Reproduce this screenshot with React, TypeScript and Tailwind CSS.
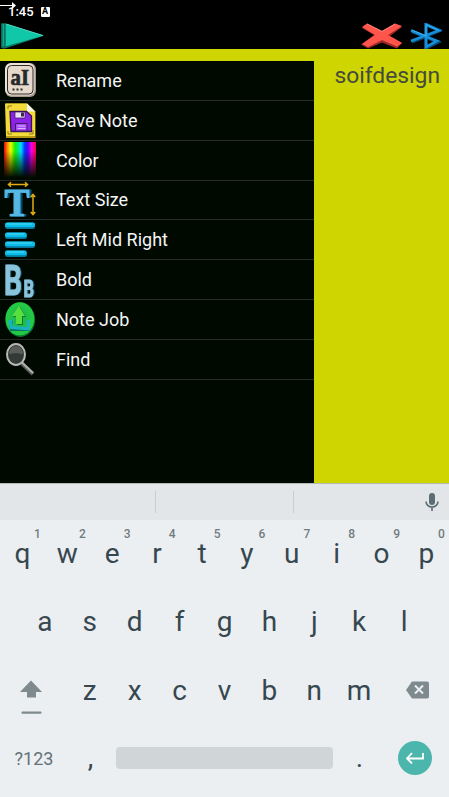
import type { ReactNode } from "react";

function RenameIcon() {
  return (
    <svg width="32" height="36" viewBox="0 0 32 36">
      <rect x="0.5" y="1" width="30.5" height="34" rx="6" fill="#a69b90" />
      <rect x="0" y="1" width="29.5" height="32.5" rx="6" fill="#eee1d5" />
      <rect x="2.5" y="3.5" width="25.5" height="28.5" rx="4" fill="#e6d8ca" stroke="#2c2b2b" strokeWidth="1" />
      <text x="5.5" y="23" fontFamily="Liberation Serif, serif" fontWeight="700" fontSize="24" fill="#252a2b" stroke="#252a2b" strokeWidth="0.7" textLength="18.5" lengthAdjust="spacingAndGlyphs">aI</text>
      <path d="M7.500 26.500h2v2h-2zM11.500 26.500h2v2h-2zM15.500 26.500h2v2h-2z" fill="#252a2b" />
    </svg>
  );
}

function SaveIcon() {
  return (
    <svg width="32" height="36" viewBox="0 0 32 36">
      <path d="M1 1.500h21l8.500 8V36H1z" fill="#b39a12" />
      <path d="M0 1.500h22l8 8V34H1z" fill="#f3dc3a" />
      <path d="M22 1.500v8h8z" fill="#f4f4f4" />
      <path d="M3 7V4h4M3 29v3h4M24 32h4v-4" fill="none" stroke="#937915" strokeWidth="1" />
      <path d="M5 9.500h16.500l5 4.500v15.500H6z" fill="#8c22e6" stroke="#351259" strokeWidth="1.3" />
      <path d="M10 10h10v6H10z" fill="#eadff2" stroke="#351259" strokeWidth="0.7" />
      <path d="M16 10.500h3v4h-3z" fill="#3c2451" />
      <path d="M10.500 21.500h11.500v7.500H10.500z" fill="#a84df7" stroke="#421a6a" strokeWidth="1" />
      <path d="M12.500 24h8M12.500 26.500h8" stroke="#dfb4ff" strokeWidth="1" />
    </svg>
  );
}

function SpectrumIcon() {
  return (
    <div className="-ml-px h-9 w-8 bg-[linear-gradient(to_bottom,transparent_25%,#000b00_98%),linear-gradient(to_right,#ed0010,#ff9b00_12%,#e6ff00_21%,#22ed00_34%,#00ec75_44%,#00dcff_53%,#0038ff_65%,#5b00ec_75%,#f500ed_86%,#ff0034)]" />
  );
}

function TextSizeIcon() {
  return (
    <svg className="overflow-visible" width="32" height="36" viewBox="0 0 32 36">
      <text className="drop-shadow-[2px_0px_0px_#07506f]" x="-0.500" y="33.500" fontFamily="Liberation Serif, serif" fontWeight="700" fontSize="40" fill="#55b8e5" stroke="#55b8e5" strokeWidth="1.200" textLength="25" lengthAdjust="spacingAndGlyphs">T</text>
      <path d="M3.500 2.500h19M6 .3 3.500 2.500 6 4.700M20 .3 22.500 2.500 20 4.700M28 13v19M25.800 15 28 12.500l2.200 2.500M25.800 30 28 32.500l2.200-2.500" fill="none" stroke="#e1ac12" strokeWidth="1.500" />
    </svg>
  );
}

function AlignIcon() {
  return (
    <svg width="32" height="36" viewBox="0 0 32 36">
      <g fill="#087799">
        <rect x="0" y="0.500" width="30" height="6.500" rx="2.500" />
        <rect x="0" y="10.500" width="22" height="6.500" rx="2.500" />
        <rect x="0" y="19.500" width="30" height="6.500" rx="2.500" />
        <rect x="0" y="28.500" width="22" height="6.500" rx="2.500" />
      </g>
      <g fill="#0bbde9">
        <rect x="0" y="0.500" width="30" height="4.800" rx="2" />
        <rect x="0" y="10.500" width="21.500" height="4.800" rx="2" />
        <rect x="0" y="19.500" width="30" height="4.800" rx="2" />
        <rect x="0" y="28.500" width="21.500" height="4.800" rx="2" />
      </g>
      <path d="M2 2h25M2 12h17M2 21h25M2 30h17" stroke="#51dcf4" strokeWidth="1" />
    </svg>
  );
}

function BoldIcon() {
  return (
    <svg className="overflow-visible" width="32" height="36" viewBox="0 0 32 36" fontFamily="Roboto, sans-serif" fontWeight="700">
      <g className="drop-shadow-[1.500px_0px_0px_#174e68]" fill="#8ac3dc" stroke="#8ac3dc" strokeWidth="1">
        <text x="-1" y="32.500" fontSize="43" textLength="18" lengthAdjust="spacingAndGlyphs">B</text>
        <text x="18.500" y="35" fontSize="24" textLength="10.500" lengthAdjust="spacingAndGlyphs">B</text>
      </g>
    </svg>
  );
}

function JobIcon() {
  return (
    <svg width="32" height="36" viewBox="0 0 32 36">
      <defs>
        <radialGradient id="job"><stop offset="0.4" stopColor="#20b951" /><stop offset="1" stopColor="#24ce3e" /></radialGradient>
      </defs>
      <ellipse cx="15.300" cy="18.700" rx="14.800" ry="17.200" fill="#0b7933" />
      <ellipse cx="14.800" cy="17.800" rx="14.300" ry="16.500" fill="url(#job)" />
      <path d="M4 20h4v6h15v-6h2v10H5z" fill="#087267" />
      <path d="m3 19 4-.5 1 6.500 14 1v-7h3v10.500L5 28z" fill="#18b3bc" />
      <path d="m15 6 6 10h-3v8h-6v-8H8z" fill="#10792f" />
      <path d="m14 5 6 10h-3v8h-6v-8H7z" fill="#57df3b" />
    </svg>
  );
}

function FindIcon() {
  return (
    <svg width="32" height="36" viewBox="0 0 32 36">
      <path d="m17 22.500 11 10.500" stroke="#5b5e5b" strokeWidth="4" />
      <path d="m17 21.500 11 10.500" stroke="#b0b0af" strokeWidth="1.800" />
      <ellipse cx="11" cy="13.500" rx="9" ry="10.500" fill="#343a35" stroke="#b6b8b6" strokeWidth="2" />
      <path d="M4 13.500Q4.500 5 11 5t7 8.500q-7-3-14 0" fill="#585d58" />
    </svg>
  );
}

function PlayIcon() {
  return (
    <svg width="44" height="26" viewBox="0 0 44 26">
      <path d="M0 1q0-1 3-1l40 12.800L4 25.500q-4 0-4-2z" fill="#08745f" />
      <path d="M4 .8 42 12.800 4 23.500z" fill="#10c7a7" />
      <path d="M.8 1v22M4 1v23" stroke="#096a5a" strokeWidth="1.300" />
      <path d="M2.400 1v22" stroke="#10a98e" strokeWidth="1.600" />
      <path d="m5 1 37 11.500" stroke="#52dac4" strokeWidth="1" />
    </svg>
  );
}

function CloseIcon() {
  return (
    <svg width="42" height="26" viewBox="0 0 42 26">
      <path d="m1 5 5-4 15 7 14-7 6 3-12 9 12 7-5 5.500-15-6-14 6-7-4 13-9.500z" fill="#a22827" />
      <path d="m1 4 5-3.500L21 8l13-7.500 7 2.500-14 9 14 8-5 3.500-15-6.500-14 7-6-3 13-9z" fill="#ff554b" />
      <path d="m6 1 15 7.500L34 1" fill="none" stroke="#ff827a" strokeWidth="1" />
    </svg>
  );
}

function BluetoothIcon() {
  return (
    <svg width="32" height="26" viewBox="0 0 32 26" fill="none">
      <path d="m2 8.500 26 10.500-12 6V1.500l14 6L2 19" stroke="#0a4875" strokeWidth="3.500" />
      <path d="m1 7.500 26 10.500-11 6V1.500l13 6L1 18" stroke="#168ed7" strokeWidth="2.600" />
      <path d="m2 7 14 6V1.500l13 6" stroke="#43b8f3" strokeWidth="0.800" />
    </svg>
  );
}

const menu: { label: string; icon: ReactNode }[] = [
  { label: "Rename", icon: <RenameIcon /> },
  { label: "Save Note", icon: <SaveIcon /> },
  { label: "Color", icon: <SpectrumIcon /> },
  { label: "Text Size", icon: <TextSizeIcon /> },
  { label: "Left Mid Right", icon: <AlignIcon /> },
  { label: "Bold", icon: <BoldIcon /> },
  { label: "Note Job", icon: <JobIcon /> },
  { label: "Find", icon: <FindIcon /> },
];

function Key({ children, hint }: { children: ReactNode; hint?: string }) {
  return (
    <div className="relative flex h-full w-[44.9px] shrink-0 items-center justify-center text-[28px] leading-none">
      {children}
      {hint && <span className="absolute top-[7px] right-[4px] text-[12px] leading-[14px] font-medium text-[#727c80]">{hint}</span>}
    </div>
  );
}

function Keyboard() {
  return (
    <section className="h-[314px] bg-[#ebeff2] text-[#37474f]">
      <div className="flex h-[37px] items-center border-t border-[#b3b9b3] bg-[#e2e6e9]">
        <div className="h-[22px] w-[156px] border-r border-[#c9ced1]" />
        <div className="h-[22px] w-[138px] border-r border-[#c9ced1]" />
        <svg className="mr-[10px] ml-auto" width="14" height="18" viewBox="0 0 14 18">
          <rect x="4" width="6" height="12" rx="3" fill="#5d6d74" />
          <path d="M1 8.500c0 3 2.500 5.500 6 5.500s6-2.500 6-5.500M7 14v4" fill="none" stroke="#5d6d74" strokeWidth="1.600" />
        </svg>
      </div>
      <div className="flex h-[68px]">
        {[..."qwertyuiop"].map((letter, i) => <Key key={letter} hint={String((i + 1) % 10)}>{letter}</Key>)}
      </div>
      <div className="flex h-[69px] justify-center pb-px">
        {[..."asdfghjkl"].map((letter) => <Key key={letter}>{letter}</Key>)}
      </div>
      <div className="flex h-[67px]">
        <div className="flex w-[67.350px] items-center pl-[20px]">
          <svg className="mt-[13px]" width="22" height="35" viewBox="0 0 22 35">
            <path d="M11 0 22 11.500h-6V17H7v-5.500H0z" transform="translate(0 .5)" fill="#7e8a8e" />
            <rect x="1.500" y="31.500" width="20" height="2.300" rx="1" fill="#7e8a8e" />
          </svg>
        </div>
        {[..."zxcvbnm"].map((letter) => <Key key={letter}>{letter}</Key>)}
        <div className="flex flex-1 items-center pb-[2px] pl-[24px]">
          <svg width="23" height="18" viewBox="0 0 23 18">
            <path d="M6 .5h15q2 0 2 2v13q0 2-2 2H6L0 9z" fill="#7e8a8e" />
            <path d="m9 4.500 8 8m0-8-8 8" stroke="#ebeff2" strokeWidth="2" />
          </svg>
        </div>
      </div>
      <div className="flex h-[68px] items-center">
        <div className="w-[68px] text-center text-[18px] text-[#647177]">?123</div>
        <Key>,</Key>
        <div className="ml-[3px] h-[22px] w-[217px] rounded bg-[#d0d5d8]" />
        <div className="ml-[4px]"><Key>.</Key></div>
        <div className="ml-[16px] flex size-[34px] items-center justify-center rounded-full bg-[#4db6ac]">
          <svg width="18" height="12" viewBox="0 0 18 12" fill="none" stroke="white" strokeWidth="1.800">
            <path d="M17 1v5.500H1M6 1 1 6.500 6 11.500" />
          </svg>
        </div>
      </div>
    </section>
  );
}

export default function App() {
  return (
    <main className="flex h-[797px] w-[449px] flex-col overflow-hidden bg-[#ced500] font-[Roboto,sans-serif]">
      <header className="relative h-[49px] shrink-0 bg-black text-white">
        <div className="flex h-[23px] items-center gap-[7px] pl-[8px] text-[13px] font-medium">
          <span>1:45</span>
          <span className="flex h-[10px] w-[9px] items-center justify-center rounded-[1px] bg-white text-[9px] leading-none font-bold text-black">A</span>
        </div>
        <svg className="absolute top-[1px] left-0" width="17" height="9" viewBox="0 0 17 9">
          <path d="M0 4.500h13" stroke="white" />
          <path d="m12 1 4 3.500L12 8z" fill="white" />
        </svg>
        <div className="flex h-[26px] items-center pr-[7px]">
          <div className="ml-px"><PlayIcon /></div>
          <div className="ml-auto"><CloseIcon /></div>
          <div className="ml-[7px]"><BluetoothIcon /></div>
        </div>
      </header>
      <div className="flex min-h-0 flex-1 justify-between pt-[12px]">
        <nav className="w-[314px] bg-[#000900]">
          {menu.map(({ label, icon }) => (
            <div key={label} className="flex h-[39.850px] items-center border-b border-[#252b25] pl-[5px]">
              <div className="w-[32px]">{icon}</div>
              <span className="ml-[19px] text-[18px] text-[#f5f5f5]">{label}</span>
            </div>
          ))}
        </nav>
        <div className="mr-[9px] text-[22.800px] leading-[29px] text-[#444b3d]">soifdesign</div>
      </div>
      <Keyboard />
    </main>
  );
}
